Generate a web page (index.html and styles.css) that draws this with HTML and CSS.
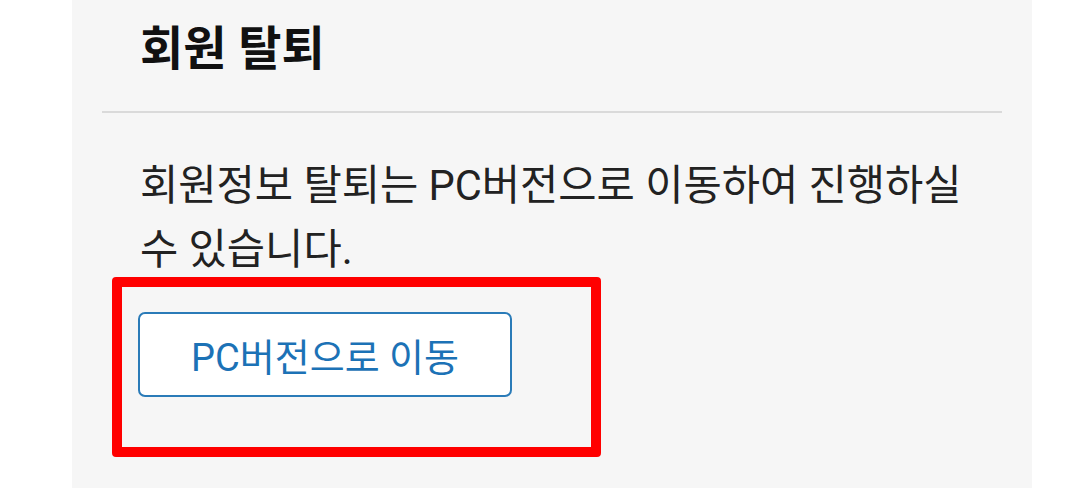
FILE: index.html
```html
<!DOCTYPE html>
<html lang="ko">
<head>
<meta charset="utf-8">
<link rel="stylesheet" href="styles.css">
</head>
<body>
<section class="panel">
  <h2 class="title">회원 탈퇴</h2>
  <div class="content">
    <p class="desc">회원정보 탈퇴는 PC버전으로 이동하여 진행하실 수 있습니다.</p>
    <button class="pc-btn" type="button">PC버전으로 이동</button>
  </div>
  <div class="highlight"></div>
</section>
</body>
</html>
```
FILE: styles.css
```css
html, body {
  margin: 0;
  padding: 0;
  background: #ffffff;
}
body {
  font-family: "Roboto", "Noto Sans CJK KR", sans-serif;
  color: #222222;
}
.panel {
  position: relative;
  margin-left: 72px;
  width: 960px;
  min-height: 488px;
  box-sizing: border-box;
  padding: 0 30px;
  background: #f6f6f6;
}
.title {
  margin: 0;
  height: 113px;
  box-sizing: border-box;
  padding-left: 38px;
  line-height: 97px;
  font-size: 47px;
  font-weight: 700;
  color: #111111;
  border-bottom: 2px solid #dadada;
}
.content {
  padding: 0 38px 0 36px;
}
.desc {
  margin: 41px 0 0 2px;
  font-size: 41.6px;
  line-height: 64px;
  color: #222222;
}
.pc-btn {
  margin-top: 30px;
  width: 374px;
  height: 85px;
  box-sizing: border-box;
  border: 2px solid #2a7bb8;
  border-radius: 7px;
  background: #ffffff;
  color: #1c72b6;
  font-family: "Roboto", "Noto Sans CJK KR", sans-serif;
  font-size: 38px;
  padding: 0;
}
.highlight {
  position: absolute;
  left: 40px;
  top: 277px;
  width: 489px;
  height: 180px;
  box-sizing: border-box;
  border: 10px solid #ff0000;
  border-radius: 4px;
}
```
